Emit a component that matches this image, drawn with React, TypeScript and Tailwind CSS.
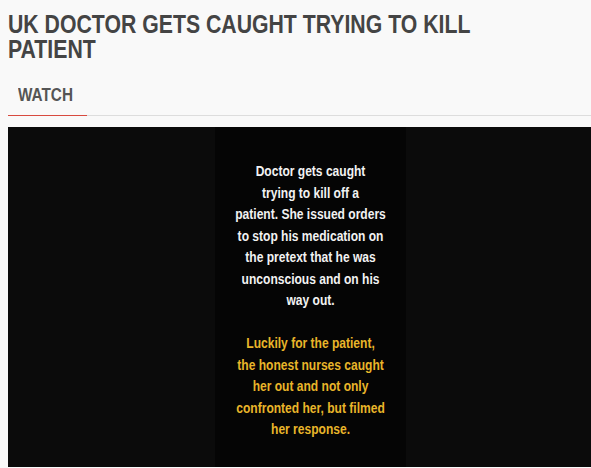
import React from 'react';

const whiteLines = [
  'Doctor gets caught',
  'trying to kill off a',
  'patient. She issued orders',
  'to stop his medication on',
  'the pretext that he was',
  'unconscious and on his',
  'way out.',
];

const yellowLines = [
  'Luckily for the patient,',
  'the honest nurses caught',
  'her out and not only',
  'confronted her, but filmed',
  'her response.',
];

export default function App() {
  return (
    <div className="min-h-[468px] overflow-hidden bg-[#f9f9f9] pl-2 font-['Liberation_Sans',Arial,sans-serif]">
      {/* the source picture is squeezed sideways, so text is narrowed with scale-x */}
      <h1 className="origin-left scale-x-[0.85] whitespace-nowrap pt-3 text-[25px] font-bold leading-[25px] text-[#444444]">
        UK DOCTOR GETS CAUGHT TRYING TO KILL
        <br />
        PATIENT
      </h1>

      <div className="mt-[24px] w-[79px] pb-[11px] pl-[10px]">
        <span className="block origin-left scale-x-[0.85] text-[18px] font-bold leading-[18px] text-[#555555]">
          WATCH
        </span>
      </div>
      <div className="flex h-px bg-[#dddddd]">
        <div className="h-px w-[79px] bg-[#d84a3f]" />
      </div>

      <div className="mt-[11px] flex h-[340px] bg-[#0b0b0b] pl-[207px]">
        <div className="flex w-[191px] shrink-0 justify-center bg-[#050505]">
          <div className="origin-top scale-x-[0.86] whitespace-nowrap pt-[34px] text-center text-[14px] font-bold leading-[21.5px]">
            <div className="text-[#f2f2f2]">
              {whiteLines.map(l => (
                <div key={l}>{l}</div>
              ))}
            </div>
            <div className="h-[21.5px]" />
            <div className="text-[#e9b52a]">
              {yellowLines.map(l => (
                <div key={l}>{l}</div>
              ))}
            </div>
          </div>
        </div>
      </div>
    </div>
  );
}
